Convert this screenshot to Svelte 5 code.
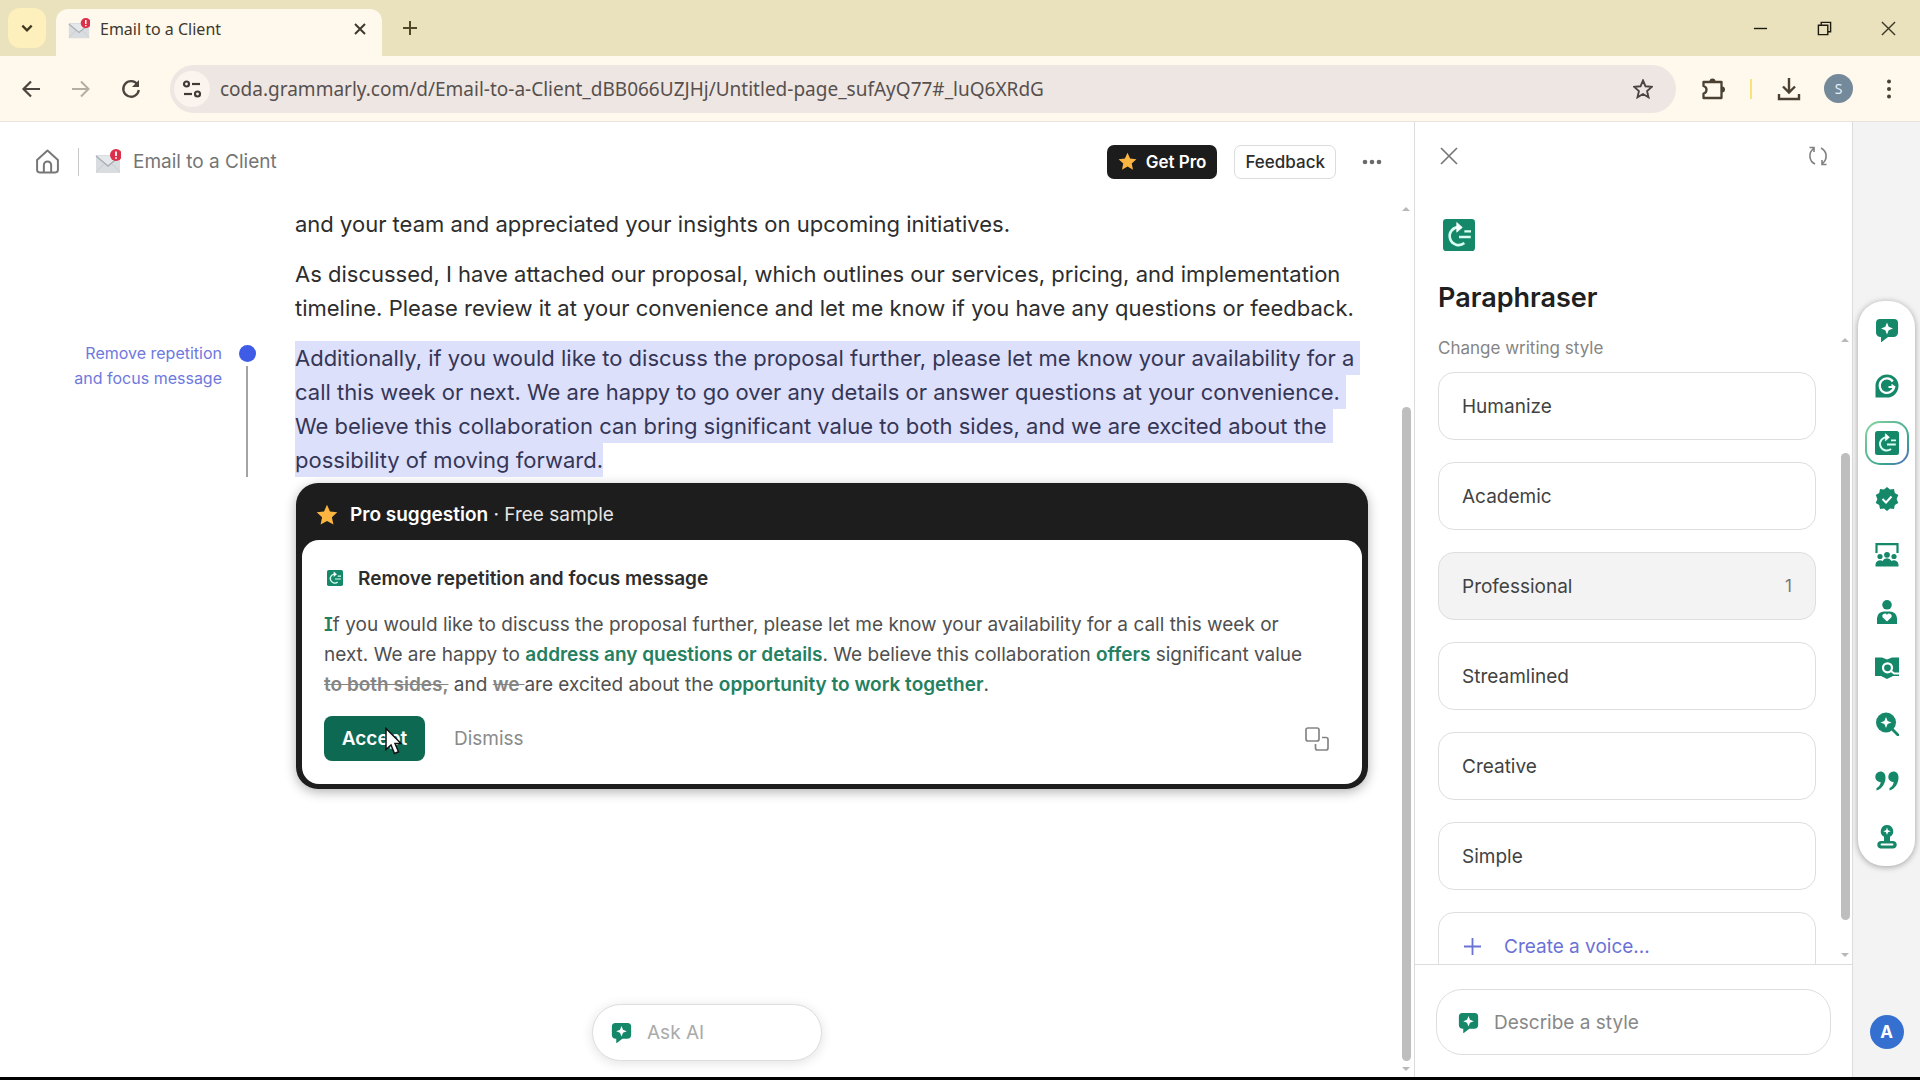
<script lang="ts">
	const intro = 'and your team and appreciated your insights on upcoming initiatives.';

	const proposal = [
		'As discussed, I have attached our proposal, which outlines our services, pricing, and implementation',
		'timeline. Please review it at your convenience and let me know if you have any questions or feedback.'
	];

	const selected = [
		'Additionally, if you would like to discuss the proposal further, please let me know your availability for a ',
		'call this week or next. We are happy to go over any details or answer questions at your convenience. ',
		'We believe this collaboration can bring significant value to both sides, and we are excited about the ',
		'possibility of moving forward.'
	];

	const styles = [
		{ name: 'Humanize' },
		{ name: 'Academic' },
		{ name: 'Professional', count: 1 },
		{ name: 'Streamlined' },
		{ name: 'Creative' },
		{ name: 'Simple' }
	];

	const agents = [
		{ id: 'chat', label: 'AI Chat' },
		{ id: 'grammarly', label: 'Proofreader' },
		{ id: 'paraphrase', label: 'Paraphraser' },
		{ id: 'verified', label: 'Humanizer' },
		{ id: 'audience', label: 'Reader Reactions' },
		{ id: 'person', label: 'AI Grader' },
		{ id: 'book', label: 'Expert Review' },
		{ id: 'search', label: 'AI Detector' },
		{ id: 'quote', label: 'Citation Finder' },
		{ id: 'stamp', label: 'Authorship' }
	];

	let active = $state('paraphrase');
	let picked = $state('Professional');
</script>

{#snippet envelope()}
	<svg class="envelope" viewBox="0 0 26 26" aria-hidden="true">
		<rect x="1" y="6" width="24" height="18" rx="1" fill="#d9dde0" />
		<path d="M1 23l9-9M25 23l-9-9" stroke="#c6cbcf" fill="none" />
		<path d="M1 7l12 10L25 7" stroke="#a9b0b5" stroke-width="1.5" fill="#e6e9eb" />
		<circle cx="21" cy="6" r="6" fill="#dc2f4a" />
		<path d="M21 2.500v4.500M21 8.200v1.600" stroke="#fff" stroke-width="1.800" />
	</svg>
{/snippet}

{#snippet star()}
	<svg class="star" viewBox="0 0 22 22" aria-hidden="true">
		<path d="M11 .8l3 6.700 7.300.8-5.400 5 1.500 7.200L11 16.900l-6.400 3.600 1.500-7.200-5.400-5L8 7.500z" fill="#fbb540" />
	</svg>
{/snippet}

{#snippet icon(id: string)}
	<svg class="icon" viewBox="0 0 24 24" aria-hidden="true">
		{#if id === 'chat'}
			<path d="M5 1h14a4 4 0 0 1 4 4v9.500a4.500 4.500 0 0 1-4.500 4.500H13l-7 5.500V19h-.5A4.500 4.500 0 0 1 1 14.500V5a4 4 0 0 1 4-4z" fill="#15886a" />
			<path d="M12 4.500l1.700 4.300L18 10.500l-4.300 1.700L12 16.500l-1.700-4.300L6 10.500l4.300-1.700z" fill="#fff" />
		{:else if id === 'grammarly'}
			<path d="M12 .5A11.500 11.500 0 1 1 12 23.500H.5V12A11.500 11.500 0 0 1 12 .5z" fill="#15886a" />
			<path d="M17.800 7.500A7.200 7.200 0 1 0 19 13h-5.500" stroke="#fff" stroke-width="2.200" fill="none" />
			<path d="M16.500 10.500L19.500 13l-1.500 3" stroke="#fff" stroke-width="1.600" fill="none" />
		{:else if id === 'paraphrase'}
			<rect width="24" height="24" rx="2.500" fill="#15886a" />
			<path d="M12.500 6.200A6.700 6.700 0 1 0 16 18" stroke="#d9fff2" stroke-width="2" fill="none" />
			<path d="M10.300 2.600l4.200 3.700-4.200 3.600z" fill="#fff" stroke="#fff" stroke-width=".5" />
			<path d="M16 9.300h5M12 13.500h8.800" stroke="#d9fff2" stroke-width="1.800" />
		{:else if id === 'verified'}
			<path d="M12 0l3 2.600 4-.5.800 3.900 3.500 2-1.700 4 1.700 4-3.500 2-.8 3.900-4-.5-3 2.600-3-2.600-4 .5-.8-3.900-3.500-2 1.700-4-1.700-4 3.500-2 .8-3.900 4 .5z" fill="#15886a" />
			<path d="M7.500 12l3.500 3.500 5.500-6" stroke="#fff" stroke-width="2" fill="none" />
		{:else if id === 'audience'}
			<path d="M1.500 10V1.200h21V10" stroke="#15886a" stroke-width="2.200" fill="none" />
			<g fill="#15886a">
				<circle cx="5" cy="13.500" r="2.600" />
				<circle cx="12" cy="11.800" r="2.900" />
				<circle cx="19" cy="13.500" r="2.600" />
				<path d="M.5 23.500v-2A4.500 4.500 0 0 1 7.500 18a5 5 0 0 1 9 0 4.500 4.500 0 0 1 7 3.500v2z" />
			</g>
		{:else if id === 'person'}
			<circle cx="12" cy="4.800" r="4.800" fill="#15886a" />
			<path d="M2 24v-6a7 7 0 0 1 7-6.500h6a7 7 0 0 1 7 6.500v6z" fill="#15886a" />
			<path d="M12 21.500l-4.200-4a2.400 2.400 0 0 1 4.200-2.700 2.400 2.400 0 0 1 4.200 2.700z" fill="#fff" />
		{:else if id === 'book'}
			<path d="M0 1.500h7l5 2 5-2h7v18.500h-6l-6 3-6-3H0z" fill="#15886a" />
			<circle cx="12.500" cy="11.800" r="4.500" stroke="#fff" stroke-width="2.200" fill="none" />
			<path d="M15.800 15l3.500 2.500H24" stroke="#fff" stroke-width="2" fill="none" />
		{:else if id === 'search'}
			<circle cx="11" cy="10.500" r="10" fill="#15886a" />
			<path d="M17.500 17.500l5.500 5.500" stroke="#15886a" stroke-width="2.800" stroke-linecap="round" />
			<path d="M11 5l1.600 3.900 3.900 1.600-3.900 1.600L11 16l-1.600-3.900-3.900-1.600 3.900-1.600z" fill="#fff" />
		{:else if id === 'quote'}
			<g fill="#15886a">
				<path d="M5.500 2.500c3 0 5 2.300 5 6 0 6-3.500 11.500-9 13V19c2.500-1 4-3.500 4.200-6H5a5 5 0 0 1-4.700-5.300A5.200 5.200 0 0 1 5.500 2.500z" />
				<path d="M18.500 2.500c3 0 5 2.300 5 6 0 6-3.500 11.500-9 13V19c2.500-1 4-3.500 4.200-6H18a5 5 0 0 1-4.700-5.300 5.200 5.200 0 0 1 5.200-5.200z" />
			</g>
		{:else if id === 'stamp'}
			<path d="M12 0a6.300 6.300 0 0 1 3 11.800V16h3.500a3.800 3.800 0 0 1 0 7.500h-13a3.800 3.800 0 0 1 0-7.500H9v-4.200A6.300 6.300 0 0 1 12 0z" fill="#15886a" />
			<path d="M12 2.500l1 2.700 2.700 1-2.700 1-1 2.700-1-2.700-2.700-1 2.700-1z" fill="#fff" />
			<path d="M6.500 19.500h11" stroke="#fff" stroke-width="1.800" stroke-linecap="round" />
		{/if}
	</svg>
{/snippet}

{#snippet scrollbar(kind: string)}
	<div class="scrollbar {kind}" aria-hidden="true">
		<svg viewBox="0 0 10 6"><path d="M5 1l4 4H1z" fill="#b8b8b8" /></svg>
		<div class="track"><div class="thumb"></div></div>
		<svg viewBox="0 0 10 6"><path d="M1 1h8L5 5z" fill="#b8b8b8" /></svg>
	</div>
{/snippet}

<div class="window">
	<div class="tabs">
		<button class="tab-search" aria-label="Search tabs">
			<svg viewBox="0 0 12 12"><path d="M2 4l4 4 4-4" stroke="#40391f" stroke-width="2" fill="none" /></svg>
		</button>
		<div class="tab">
			{@render envelope()}
			<span class="tab-title">Email to a Client</span>
			<button class="tab-close" aria-label="Close tab">
				<svg viewBox="0 0 12 12"><path d="M1 1l10 10M11 1L1 11" stroke="#40372e" stroke-width="2" /></svg>
			</button>
		</div>
		<button class="new-tab" aria-label="New tab">
			<svg viewBox="0 0 16 16"><path d="M8 1v14M1 8h14" stroke="#4e4829" stroke-width="2" /></svg>
		</button>
		<div class="window-controls">
			<button aria-label="Minimize"><svg viewBox="0 0 16 16"><path d="M1 8h14" stroke="#1d1a10" stroke-width="1.500" /></svg></button>
			<button aria-label="Restore">
				<svg viewBox="0 0 16 16"><path d="M1.500 4.500h10v10h-10zM4.500 4V1.500h10v10H12" stroke="#1d1a10" stroke-width="1.500" fill="none" /></svg>
			</button>
			<button aria-label="Close"><svg viewBox="0 0 16 16"><path d="M1 1l14 14M15 1L1 15" stroke="#3b3828" stroke-width="1.500" /></svg></button>
		</div>
	</div>

	<div class="toolbar">
		<button class="nav" aria-label="Back">
			<svg viewBox="0 0 20 20"><path d="M19 10H3M10 2.500L2.500 10l7.500 7.500" stroke="#4a453e" stroke-width="2.200" fill="none" /></svg>
		</button>
		<button class="nav" aria-label="Forward">
			<svg viewBox="0 0 20 20"><path d="M1 10h16M10 2.500l7.500 7.500-7.500 7.500" stroke="#b3ada4" stroke-width="2" fill="none" /></svg>
		</button>
		<button class="nav" aria-label="Reload">
			<svg viewBox="0 0 20 20">
				<path d="M16.500 5.500A7.800 7.800 0 1 0 17.800 11" stroke="#4a453e" stroke-width="2.300" fill="none" />
				<path d="M18 1v7h-7z" fill="#4a453e" />
			</svg>
		</button>
		<div class="address">
			<button class="site-info" aria-label="Site information">
				<svg viewBox="0 0 20 20">
					<g stroke="#3f3a38" stroke-width="2.200" fill="none">
						<circle cx="4.500" cy="5" r="2.500" /><path d="M10 5h8" />
						<circle cx="15.500" cy="15" r="2.500" /><path d="M2 15h8" />
					</g>
				</svg>
			</button>
			<input
				class="url"
				aria-label="Address"
				value="coda.grammarly.com/d/Email-to-a-Client_dBB066UZJHj/Untitled-page_sufAyQ77#_luQ6XRdG"
			/>
			<button class="nav bookmark" aria-label="Bookmark this tab">
				<svg viewBox="0 0 20 20"><path d="M10 1.500l2.500 5.800 6.300.6-4.700 4.200 1.400 6.200-5.500-3.300-5.500 3.300 1.400-6.200L1.200 7.900l6.300-.6z" stroke="#4a4443" stroke-width="1.900" fill="none" /></svg>
			</button>
		</div>
		<div class="extras">
			<button class="nav tall" aria-label="Extensions">
				<svg viewBox="0 0 24 24">
					<path d="M2.500 5h18v16h-18v-4.500c4-1 4-6.500 0-7.500z" stroke="#4a4132" stroke-width="2.300" stroke-linejoin="round" fill="none" />
					<path d="M8.500 4.500a3 3 0 0 1 6 0zM21 9.500a3 3 0 0 1 0 6z" fill="#4a4132" />
				</svg>
			</button>
			<span class="split"></span>
			<button class="nav tall" aria-label="Downloads">
				<svg viewBox="0 0 24 24"><path d="M12 1v14M6 9.500l6 6 6-6M2 17v5h20v-5" stroke="#4a4132" stroke-width="2.400" fill="none" /></svg>
			</button>
			<button class="profile" aria-label="Profile">S</button>
			<button class="nav" aria-label="Menu">
				<svg viewBox="0 0 20 20" fill="#4a4132"><circle cx="10" cy="2.500" r="2" /><circle cx="10" cy="10" r="2" /><circle cx="10" cy="17.500" r="2" /></svg>
			</button>
		</div>
	</div>

	<div class="workspace">
		<main>
			<header>
				<a class="home" href="/" aria-label="Home">
					<svg viewBox="0 0 24 24">
						<path d="M2 10.500L12 1.500l10 9V20a2.500 2.500 0 0 1-2.500 2.500h-15A2.500 2.500 0 0 1 2 20z" stroke="#777" stroke-width="1.900" stroke-linejoin="round" fill="none" />
						<path d="M8.500 22v-6.500a3.500 3.500 0 0 1 7 0V22" stroke="#777" stroke-width="1.900" fill="none" />
					</svg>
				</a>
				<span class="divider"></span>
				{@render envelope()}
				<span class="doc-title">Email to a Client</span>
				<button class="get-pro">{@render star()}Get Pro</button>
				<button class="feedback">Feedback</button>
				<button class="more" aria-label="More options">
					<svg viewBox="0 0 20 6" fill="#6b6b6b"><circle cx="3" cy="3" r="2.300" /><circle cx="10" cy="3" r="2.300" /><circle cx="17" cy="3" r="2.300" /></svg>
				</button>
			</header>

			<div class="canvas">
				<article>
					<p class="text">{intro}</p>
					<p class="text">
						{#each proposal as line}<span class="line">{line}</span>{/each}
					</p>
					<div class="annotated">
						<div class="note">Remove repetition<br />and focus message</div>
						<div class="marker"><span class="dot"></span><span class="stem"></span></div>
						<p class="text highlight">
							{#each selected as line}<span class="line">{line}</span>{/each}
						</p>
					</div>

					<section class="suggestion">
						<div class="pro">{@render star()}<span><strong>Pro suggestion</strong> · Free sample</span></div>
						<div class="card">
							<h2>{@render icon('paraphrase')}Remove repetition and focus message</h2>
							<p>
								<b class="first">I</b>f you would like to discuss the proposal further, please let me know your availability for a call this week or<br />
								next. We are happy to <b>address any questions or details</b>. We believe this collaboration <b>offers</b> significant value<br />
								<del>to both sides,</del> and <del>we{' '}</del>are excited about the <b>opportunity to work together</b>.
							</p>
							<div class="actions">
								<button class="accept">
									Accept
									<svg class="pointer" viewBox="0 0 18 28" aria-hidden="true">
										<path d="M2 1.500v21l5-4.500 3.500 8.500 4-1.700L11 16.500h6z" fill="#fff" stroke="#111" stroke-width="1.500" />
									</svg>
								</button>
								<button class="dismiss">Dismiss</button>
								<button class="compare" aria-label="Compare versions">
									<svg viewBox="0 0 24 24" stroke="#858585" stroke-width="1.700" fill="none">
										<rect x="1" y="1" width="13" height="13" rx="2" />
										<path d="M17 10.500h4a2 2 0 0 1 2 2V21a2 2 0 0 1-2 2h-8.500a2 2 0 0 1-2-2v-4" />
									</svg>
								</button>
							</div>
						</div>
					</section>
				</article>
				{@render scrollbar('doc')}
			</div>

			<label class="ask">
				{@render icon('chat')}
				<input placeholder="Ask AI" aria-label="Ask AI" />
			</label>
		</main>

		<aside>
			<div class="panel-top">
				<button aria-label="Close panel"><svg viewBox="0 0 20 20"><path d="M2 2l16 16M18 2L2 18" stroke="#777" stroke-width="1.700" /></svg></button>
				<button aria-label="Refresh">
					<svg viewBox="0 0 20 20" stroke="#808080" stroke-width="1.600" fill="none">
						<path d="M7 18C1 15 0 7 5.500 2.500M1.500 1.500h4.500v4.500M13 2c6 3 7 11 1.500 15.500M18.500 18.500H14V14" />
					</svg>
				</button>
			</div>
			<div class="panel-title">
				{@render icon('paraphrase')}
				<h1>Paraphraser</h1>
			</div>
			<div class="panel-body">
				<div class="styles">
					<div class="caption">Change writing style</div>
					{#each styles as style}
						<button class="style" class:picked={picked === style.name} onclick={() => (picked = style.name)}>
							{style.name}
							{#if style.count}<span class="count">{style.count}</span>{/if}
						</button>
					{/each}
					<button class="style create">
						<svg viewBox="0 0 16 16"><path d="M8 0v16M0 8h16" stroke="#6b72d6" stroke-width="1.700" /></svg>
						Create a voice...
					</button>
				</div>
				{@render scrollbar('panel')}
			</div>
			<div class="panel-foot">
				<label class="describe">
					{@render icon('chat')}
					<input placeholder="Describe a style" aria-label="Describe a style" />
				</label>
			</div>
		</aside>

		<nav class="rail">
			<div class="agents">
				{#each agents as agent}
					<button class="agent" class:active={active === agent.id} aria-label={agent.label} onclick={() => (active = agent.id)}>
						{@render icon(agent.id)}
					</button>
				{/each}
			</div>
			<button class="account" aria-label="Account">A</button>
		</nav>
	</div>
</div>

<style>
	:global(body) {
		background: #000;
	}

	.window {
		display: flex;
		flex-direction: column;
		box-sizing: border-box;
		height: 100vh;
		border-bottom: 3px solid #000;
		font-family: Inter, 'Liberation Sans', sans-serif;
		color: #2d2d2d;
		background: #fff;
	}

	button {
		display: flex;
		align-items: center;
		padding: 0;
		border: 0;
		background: none;
		font: inherit;
		color: inherit;
	}

	input {
		min-width: 0;
		padding: 0;
		border: 0;
		outline: 0;
		background: none;
		font: inherit;
		color: inherit;
	}

	svg {
		display: block;
		flex: none;
	}

	.icon {
		width: 24px;
		height: 24px;
	}

	.envelope {
		width: 26px;
		height: 26px;
	}

	.star {
		width: 22px;
		height: 22px;
	}

	/* browser chrome */
	.tabs {
		display: flex;
		align-items: flex-end;
		height: 56px;
		padding-left: 8px;
		background: #eae2bd;
		font-family: 'Noto Sans', 'Open Sans', sans-serif;
	}

	.tab-search {
		justify-content: center;
		width: 38px;
		height: 40px;
		margin: 0 10px 8px 0;
		border-radius: 12px;
		background: #fdf0bd;
	}

	.tab-search svg {
		width: 14px;
		height: 14px;
	}

	.tab {
		display: flex;
		align-items: center;
		gap: 10px;
		box-sizing: border-box;
		width: 326px;
		height: 47px;
		padding: 0 16px 8px 12px;
		border-radius: 12px 12px 0 0;
		background: #fff8ec;
	}

	.tab .envelope {
		width: 22px;
		height: 22px;
	}

	.tab-title {
		flex: 1;
		font-size: 16px;
		color: #40382d;
	}

	.tab-close svg {
		width: 12px;
		height: 12px;
	}

	.new-tab {
		height: 56px;
		margin-left: 20px;
	}

	.new-tab svg {
		width: 16px;
		height: 16px;
	}

	.window-controls {
		display: flex;
		height: 56px;
		margin-left: auto;
	}

	.window-controls button {
		justify-content: center;
		width: 64px;
	}

	.window-controls svg {
		width: 15px;
		height: 15px;
	}

	.toolbar {
		display: flex;
		align-items: center;
		height: 65px;
		padding: 0 10px;
		border-bottom: 1px solid #e8e4dc;
		background: #fff8ec;
		font-family: 'Noto Sans', 'Open Sans', sans-serif;
	}

	.nav {
		justify-content: center;
		width: 42px;
		height: 42px;
		margin-right: 8px;
	}

	.nav svg {
		width: 20px;
		height: 20px;
	}

	.nav.tall svg {
		width: 24px;
		height: 24px;
	}

	.address {
		display: flex;
		flex: 1;
		align-items: center;
		height: 48px;
		margin-left: 10px;
		border-radius: 24px;
		background: #eee6e2;
	}

	.site-info {
		justify-content: center;
		width: 36px;
		height: 36px;
		margin: 0 10px 0 4px;
		border-radius: 50%;
		background: #fbf4ee;
	}

	.site-info svg {
		width: 20px;
		height: 20px;
	}

	.url {
		flex: 1;
		font-size: 19px;
		color: #57504e;
	}

	.bookmark {
		margin-right: 12px;
	}

	.extras {
		display: flex;
		align-items: center;
		padding-left: 16px;
	}

	.extras .nav {
		margin: 0;
	}

	.split {
		width: 2px;
		height: 20px;
		margin: 0 16px;
		background: #f6e37c;
	}

	.profile {
		justify-content: center;
		width: 29px;
		height: 29px;
		margin: 0 15px 0 14px;
		border-radius: 50%;
		background: #74899a;
		font-size: 14px;
		color: #e3f1ff;
	}

	/* document */
	.workspace {
		display: flex;
		flex: 1;
		min-height: 0;
	}

	main {
		position: relative;
		display: flex;
		flex: 1;
		flex-direction: column;
		min-width: 0;
	}

	header {
		display: flex;
		align-items: center;
		height: 79px;
		padding: 0 32px 0 35px;
	}

	.home svg {
		width: 25px;
		height: 25px;
	}

	.divider {
		width: 1px;
		height: 28px;
		margin: 0 16px 0 18px;
		background: #c9c9c9;
	}

	.doc-title {
		flex: 1;
		margin-left: 12px;
		font-size: 19px;
		color: #757575;
	}

	.get-pro,
	.feedback {
		box-sizing: border-box;
		height: 34px;
		padding: 0 11px;
		border-radius: 7px;
		font-size: 17px;
		font-weight: 500;
	}

	.get-pro {
		gap: 9px;
		margin-right: 17px;
		background: #1c1c1c;
		font-weight: 600;
		color: #fff;
	}

	.get-pro .star {
		width: 19px;
		height: 19px;
	}

	.feedback {
		padding: 0 10px;
		border: 1px solid #d9dddd;
	}

	.more {
		margin-left: 26px;
	}

	.more svg {
		width: 20px;
		height: 6px;
	}

	.canvas {
		display: flex;
		flex: 1;
		min-height: 0;
	}

	article {
		flex: 1;
		min-width: 0;
		overflow: hidden;
		padding-top: 6px;
	}

	.text {
		margin: 0 0 16px 295px;
		font-size: 22px;
		line-height: 34px;
	}

	.line {
		display: block;
		width: fit-content;
		white-space: pre;
	}

	.annotated {
		display: grid;
		grid-template-columns: 222px 50px 1fr;
	}

	.note {
		font-size: 16px;
		line-height: 25px;
		text-align: right;
		color: #6e79dd;
	}

	.marker {
		display: flex;
		flex-direction: column;
		align-items: center;
		gap: 4px;
		padding-top: 4px;
	}

	.dot {
		width: 17px;
		height: 17px;
		border-radius: 50%;
		background: #3f5ce6;
	}

	.stem {
		flex: 1;
		width: 2px;
		background: #a6a3a6;
	}

	.highlight {
		margin: 0 0 0 23px;
		color: #353656;
	}

	.highlight .line {
		background: #dde0fb;
	}

	.suggestion {
		margin: 6px 32px 0 296px;
		padding: 0 6px 5px;
		border-radius: 22px;
		background: #1d1d1d;
		box-shadow: 0 3px 12px rgba(0, 0, 0, 0.3);
	}

	.pro {
		display: flex;
		align-items: center;
		gap: 12px;
		box-sizing: border-box;
		height: 57px;
		padding: 6px 14px 0;
		font-size: 19px;
		color: #e6e6e6;
	}

	.pro strong {
		font-weight: 600;
		color: #fff;
	}

	.card {
		padding: 23px 33px 23px 22px;
		border-radius: 17px;
		background: #fff;
	}

	.card h2 {
		display: flex;
		align-items: center;
		gap: 15px;
		height: 30px;
		margin: 0 0 17px 3px;
		font-size: 19px;
		font-weight: 600;
	}

	.card h2 .icon {
		width: 16px;
		height: 16px;
	}

	.card p {
		margin: 0;
		font-size: 19px;
		line-height: 30px;
		white-space: nowrap;
		color: #505050;
	}

	.card b {
		font-weight: 600;
		color: #24805f;
	}

	.card .first {
		font-feature-settings: 'cv08';
	}

	.card del {
		font-weight: 600;
		white-space: pre;
		color: #858585;
	}

	.actions {
		display: flex;
		align-items: center;
		margin-top: 16px;
	}

	.accept {
		position: relative;
		justify-content: center;
		width: 101px;
		height: 45px;
		border-radius: 8px;
		background: #0e6953;
		font-size: 19px;
		font-weight: 600;
		color: #fff;
	}

	.pointer {
		position: absolute;
		top: 11px;
		left: 60px;
		width: 18px;
		height: 28px;
	}

	.dismiss {
		margin-left: 29px;
		font-size: 19px;
		color: #8a8a8a;
	}

	.compare {
		margin-left: auto;
	}

	.compare svg {
		width: 24px;
		height: 24px;
	}

	.scrollbar {
		display: flex;
		flex-direction: column;
		align-items: center;
		width: 12px;
	}

	.scrollbar svg {
		width: 10px;
		height: 6px;
	}

	.track {
		display: flex;
		flex: 1;
		flex-direction: column;
		justify-content: flex-end;
	}

	.thumb {
		width: 9px;
		border-radius: 5px;
		background: #bebebe;
	}

	.scrollbar.doc {
		padding: 5px 2px 5px 0;
	}

	.doc .track {
		padding-bottom: 5px;
	}

	.doc .thumb {
		height: 77%;
	}

	.ask {
		position: absolute;
		bottom: 16px;
		left: 50%;
		display: flex;
		align-items: center;
		gap: 15px;
		box-sizing: border-box;
		width: 230px;
		height: 57px;
		padding: 0 18px;
		border: 1px solid #dedede;
		border-radius: 29px;
		background: #fff;
		box-shadow: 0 2px 12px rgba(0, 0, 0, 0.12);
		font-size: 19px;
		transform: translateX(-50%);
	}

	.ask .icon,
	.describe .icon {
		width: 21px;
		height: 21px;
	}

	.ask input::placeholder {
		color: #aaa;
		opacity: 1;
	}

	/* paraphraser panel */
	aside {
		display: flex;
		flex-direction: column;
		box-sizing: border-box;
		width: 439px;
		border: solid #dcdcdc;
		border-width: 0 1px;
	}

	.panel-top {
		display: flex;
		justify-content: space-between;
		padding: 24px 24px 0 24px;
	}

	.panel-top svg {
		width: 20px;
		height: 20px;
	}

	.panel-title {
		padding: 53px 0 0 23px;
	}

	.panel-title .icon {
		width: 32px;
		height: 32px;
		margin-left: 5px;
	}

	h1 {
		height: 34px;
		margin: 30px 0 16px;
		font-size: 27px;
		font-weight: 600;
		line-height: 34px;
		color: #202020;
	}

	.panel-body {
		display: flex;
		flex: 1;
		min-height: 0;
	}

	.styles {
		display: flex;
		flex: 1;
		flex-direction: column;
		gap: 22px;
		overflow: hidden;
		padding: 5px 22px 0 23px;
	}

	.caption {
		height: 24px;
		margin-bottom: -10px;
		font-size: 17px;
		line-height: 24px;
		color: #858585;
	}

	.style {
		flex: none;
		justify-content: space-between;
		box-sizing: border-box;
		height: 68px;
		padding: 0 23px;
		border: 1px solid #dedede;
		border-radius: 16px;
		font-size: 19px;
		color: #424242;
	}

	.picked {
		background: #f3f3f3;
	}

	.count {
		font-size: 17px;
		color: #777;
	}

	.create {
		justify-content: flex-start;
		gap: 23px;
		padding-left: 25px;
		color: #6b72d6;
	}

	.create svg {
		width: 17px;
		height: 17px;
	}

	.scrollbar.panel {
		padding: 6px 1px;
	}

	.panel .track {
		padding-bottom: 32px;
	}

	.panel .thumb {
		height: 81%;
	}

	.panel-foot {
		padding: 24px 21px 22px 21px;
		border-top: 1px solid #dcdcdc;
	}

	.describe {
		display: flex;
		align-items: center;
		gap: 15px;
		box-sizing: border-box;
		height: 66px;
		padding: 0 21px;
		border: 1px solid #dedede;
		border-radius: 26px;
		font-size: 19px;
	}

	.describe input::placeholder {
		color: #888;
		opacity: 1;
	}

	/* agent rail */
	.rail {
		display: flex;
		flex-direction: column;
		align-items: center;
		justify-content: space-between;
		box-sizing: border-box;
		width: 67px;
		padding: 179px 0 28px;
		background: #f3f3f3;
	}

	.agents {
		display: flex;
		flex-direction: column;
		align-items: center;
		justify-content: space-between;
		box-sizing: border-box;
		width: 57px;
		height: 565px;
		padding: 7px 0;
		border-radius: 26px;
		background: #fff;
		box-shadow: 0 1px 6px rgba(0, 0, 0, 0.35);
	}

	.agent {
		justify-content: center;
		box-sizing: border-box;
		width: 44px;
		height: 44px;
		border: 2px solid transparent;
		border-radius: 15px;
	}

	.agent.active {
		background:
			linear-gradient(#fff, #fff) padding-box,
			linear-gradient(135deg, #8bd6a0, #3aa58f 70%, #5a62c8) border-box;
	}

	.account {
		justify-content: center;
		width: 34px;
		height: 34px;
		border-radius: 50%;
		background: #3570d0;
		font-size: 17px;
		font-weight: 700;
		color: #fff;
	}
</style>
